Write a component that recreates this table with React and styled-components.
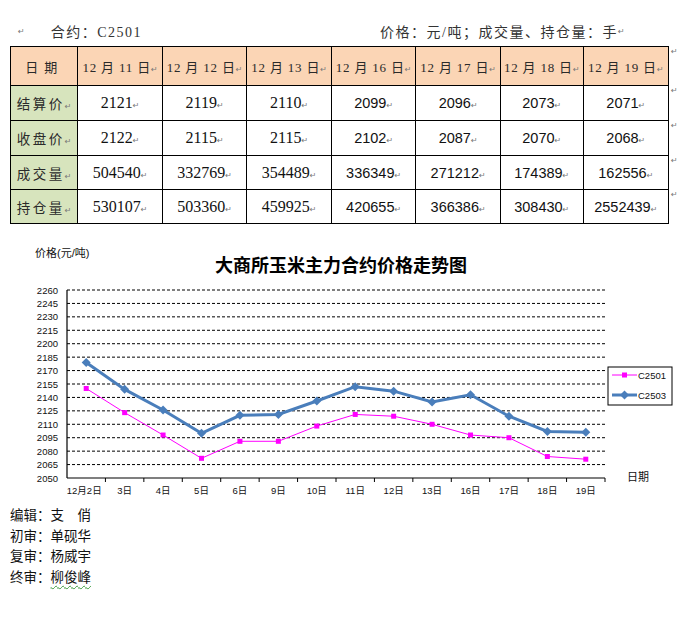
import React from "react";
import styled, { createGlobalStyle } from "styled-components";

const GlobalStyle = createGlobalStyle`
    body {
        margin: 0;
        background: #fff;
        font-family: "Liberation Serif", "Noto Sans CJK SC", serif;
        color: #111;
    }
`;

const Page = styled.div`
    width: 680px;
    height: 626px;
    overflow: hidden;
`;

const TopLine = styled.div`
    display: flex;
    align-items: center;
    height: 30px;
    padding-top: 16px;
    font-family: "Liberation Serif", "Noto Sans CJK SC", serif;
    font-size: 14px;
    letter-spacing: 1.5px;
    color: #333;
`;

const Contract = styled.div`
    display: flex;
    align-items: center;
    margin-left: 18px;
    width: 362px;
`;

const Units = styled.div`
    display: flex;
    align-items: center;
    flex: 1;
`;

const Mark = styled.span`
    font-family: "DejaVu Sans", sans-serif;
    font-size: 8px;
    color: #777;
    letter-spacing: 0;
    margin-left: ${props => props.gap || 0}px;
    margin-right: ${props => props.after || 0}px;
`;

const Grid = styled.table`
    margin-left: 10px;
    border-collapse: collapse;
    table-layout: fixed;
`;

const Row = styled.tr`
    height: ${props => props.h}px;
`;

const Cell = styled.td`
    border: 1.5px solid #000;
    padding: 0;
    text-align: center;
    background: ${props =>
        props.head ? "#fbd5b5" : props.label ? "#d7e4bd" : "#fff"};
    font-family: ${props =>
        props.sans
            ? '"Liberation Sans", "Noto Sans CJK SC", sans-serif'
            : '"Liberation Serif", "Noto Sans CJK SC", serif'};
    font-size: ${props =>
        props.head ? 13 : props.label ? 13.5 : props.sans ? 14.5 : 16}px;
    letter-spacing: ${props => (props.label ? 2.5 : props.head ? 0.8 : 0)}px;
    color: ${props => (props.label || props.head ? "#2a2a2a" : "#111")};
    white-space: nowrap;
`;

const HeadLabel = styled.span`
    letter-spacing: 6px;
`;

const EolCell = styled.td`
    width: 8px;
    padding: 0 0 0 2px;
    vertical-align: top;
    font-size: 8px;
    color: #777;
    font-family: "DejaVu Sans", sans-serif;
`;

const ChartWrap = styled.div`
    margin-top: 14px;
    height: 266px;
`;

const ChartTitle = styled.text`
    font-family: "Noto Sans CJK SC", sans-serif;
    font-weight: 700;
    font-size: 18px;
    fill: #000;
`;

const AxisText = styled.text`
    font-family: "Liberation Sans", "Noto Sans CJK SC", sans-serif;
    font-size: ${props => props.size || 9.5}px;
    fill: #111;
`;

const Footer = styled.div`
    display: flex;
    flex-direction: column;
    padding-left: 10px;
    font-family: "Noto Sans CJK SC", sans-serif;
    font-size: 13.5px;
    line-height: 20.5px;
    color: #111;
`;

const Squiggle = styled.span`
    text-decoration: underline wavy #3a9a3a;
    text-decoration-thickness: 1px;
    text-underline-offset: 3px;
`;

const widths = [68, 85, 85, 85, 85, 85, 83, 86];
const dates = ["11", "12", "13", "16", "17", "18", "19"];
const rows = [
    { label: "结算价", values: ["2121", "2119", "2110", "2099", "2096", "2073", "2071"] },
    { label: "收盘价", values: ["2122", "2115", "2115", "2102", "2087", "2070", "2068"] },
    { label: "成交量", values: ["504540", "332769", "354489", "336349", "271212", "174389", "162556"] },
    { label: "持仓量", values: ["530107", "503360", "459925", "420655", "366386", "308430", "2552439"] },
];
const rowHeights = [35, 35, 34, 34];

const cats = ["12月2日", "3日", "4日", "5日", "6日", "9日", "10日", "11日", "12日", "13日", "16日", "17日", "18日", "19日"];
const c2501 = [2150, 2123, 2098, 2072, 2091, 2091, 2108, 2121, 2119, 2110, 2098, 2095, 2074, 2071];
const c2503 = [2179, 2149, 2126, 2100, 2120, 2121, 2136, 2152, 2147, 2135, 2143, 2119, 2102, 2101];

const PL = 67;
const PR = 605;
const PT = 52;
const PB = 240;
const step = (PR - PL) / cats.length;
const xAt = i => PL + step * (i + 0.5);
const yAt = v => PB - ((v - 2050) * (PB - PT)) / 210;

const ticks = [];
for (let v = 2050; v <= 2260; v += 15) ticks.push(v);

const Diamond = ({ x, y }) => (
    <polygon
        points={`${x},${y - 4.5} ${x + 4.5},${y} ${x},${y + 4.5} ${x - 4.5},${y}`}
        fill="#4a7ebb"
    />
);

const Square = ({ x, y }) => (
    <rect x={x - 2.5} y={y - 2.5} width="5" height="5" fill="#ff00ff" />
);

const PriceChart = () => {
    const line = data => data.map((v, i) => `${xAt(i)},${yAt(v)}`).join(" ");
    return (
        <svg width="680" height="266" viewBox="0 0 680 266">
            <AxisText x="35" y="19" size={11}>价格(元/吨)</AxisText>
            <ChartTitle x="341" y="34" textAnchor="middle">
                大商所玉米主力合约价格走势图
            </ChartTitle>
            {ticks.map(v => (
                <g key={v}>
                    {v > 2050 && (
                        <line
                            x1={PL}
                            x2={PR}
                            y1={yAt(v)}
                            y2={yAt(v)}
                            stroke="#000"
                            strokeWidth="1"
                            strokeDasharray="3 2"
                        />
                    )}
                    <AxisText x="58" y={yAt(v) + 3.5} textAnchor="end">
                        {v}
                    </AxisText>
                </g>
            ))}
            <line x1={PL} x2={PL} y1={PT} y2={PB} stroke="#000" strokeWidth="1.2" />
            <line x1={PL} x2={PR} y1={PB} y2={PB} stroke="#000" strokeWidth="1.2" />
            {cats.map((c, i) => (
                <g key={c}>
                    <line
                        x1={PL + step * (i + 1)}
                        x2={PL + step * (i + 1)}
                        y1={PB}
                        y2={PB + 4}
                        stroke="#000"
                    />
                    <AxisText x={xAt(i) - (i === 0 ? 2 : 0)} y={PB + 16} textAnchor="middle">
                        {c}
                    </AxisText>
                </g>
            ))}
            <polyline points={line(c2503)} fill="none" stroke="#4a7ebb" strokeWidth="3" />
            {c2503.map((v, i) => (
                <Diamond key={i} x={xAt(i)} y={yAt(v)} />
            ))}
            <polyline points={line(c2501)} fill="none" stroke="#ff00ff" strokeWidth="1" />
            {c2501.map((v, i) => (
                <Square key={i} x={xAt(i)} y={yAt(v)} />
            ))}
            <AxisText x="627" y="243" size={11}>日期</AxisText>
            {/* legend */}
            <rect x="608" y="129" width="64" height="38" fill="#fff" stroke="#000" strokeWidth="1" />
            <line x1="612" x2="637" y1="137" y2="137" stroke="#ff00ff" strokeWidth="1" />
            <Square x={624.5} y={137} />
            <AxisText x="638" y="140.5" size={9.5}>C2501</AxisText>
            <line x1="612" x2="637" y1="157" y2="157" stroke="#4a7ebb" strokeWidth="3" />
            <Diamond x={624.5} y={157} />
            <AxisText x="638" y="160.5" size={9.5}>C2503</AxisText>
        </svg>
    );
};

const App = () => {
    return (
        <Page>
            <GlobalStyle />
            <TopLine>
                <Contract>
                    <Mark after={26}>↵</Mark>
                    合约：C2501
                </Contract>
                <Units>
                    价格：元/吨；成交量、持仓量：手<Mark>↵</Mark>
                </Units>
            </TopLine>
            <Grid>
                <colgroup>
                    {widths.map((w, i) => (
                        <col key={i} style={{ width: w }} />
                    ))}
                    <col style={{ width: 8 }} />
                </colgroup>
                <tbody>
                    <Row h={39}>
                        <Cell head>
                            <HeadLabel>日期</HeadLabel>
                        </Cell>
                        {dates.map(d => (
                            <Cell head key={d}>
                                12 月 {d} 日<Mark>↵</Mark>
                            </Cell>
                        ))}
                        <EolCell>↵</EolCell>
                    </Row>
                    {rows.map((r, ri) => (
                        <Row h={rowHeights[ri]} key={r.label}>
                            <Cell label>
                                {r.label}
                                <Mark>↵</Mark>
                            </Cell>
                            {r.values.map((v, i) => (
                                <Cell key={i} sans={i >= 3}>
                                    {v}
                                    <Mark>↵</Mark>
                                </Cell>
                            ))}
                            <EolCell>↵</EolCell>
                        </Row>
                    ))}
                </tbody>
            </Grid>
            <ChartWrap>
                <PriceChart />
            </ChartWrap>
            <Footer>
                <div>编辑：支　俏</div>
                <div>初审：单砚华</div>
                <div>复审：杨威宇</div>
                <div>
                    终审：<Squiggle>柳俊峰</Squiggle>
                </div>
            </Footer>
        </Page>
    );
};

export default App;
